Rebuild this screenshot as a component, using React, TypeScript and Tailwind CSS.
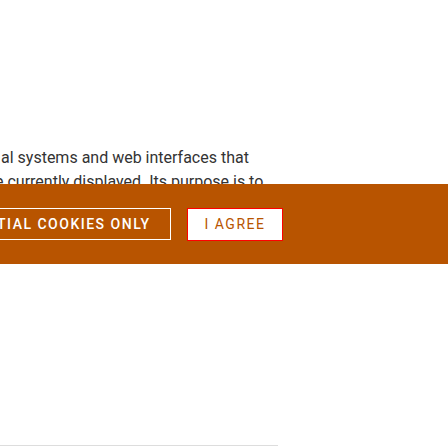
import * as React from "react";

export default function App(): React.JSX.Element {
  return (
    <div className="relative h-[448px] w-[448px] overflow-hidden bg-white font-['Roboto',sans-serif]">
      <div className="pt-[146px] text-[16px] leading-[24px] text-[#333] whitespace-nowrap">
        <div className="ml-[1px]">al systems and web interfaces that</div>
        <div className="ml-[-5px]">e currently displayed. Its purpose is to</div>
      </div>

      {/* cookie banner */}
      <div className="absolute left-0 top-[184px] flex h-[80px] w-full items-center gap-4 bg-[#b85400]">
        <button className="ml-[-72px] flex h-[32px] items-center border border-white pl-[18px] pr-[19px] text-[14px] font-medium uppercase tracking-[1.5px] text-white whitespace-nowrap">
          Essential cookies only
        </button>
        <button className="flex h-[33px] items-center border border-[#ff0000] bg-white px-[17px] text-[14px] uppercase tracking-[1.5px] text-[#b85400] whitespace-nowrap">
          I agree
        </button>
      </div>

      <div className="absolute bottom-[2px] left-0 h-[1px] w-[278px] bg-[#dddddd]" />
    </div>
  );
}
